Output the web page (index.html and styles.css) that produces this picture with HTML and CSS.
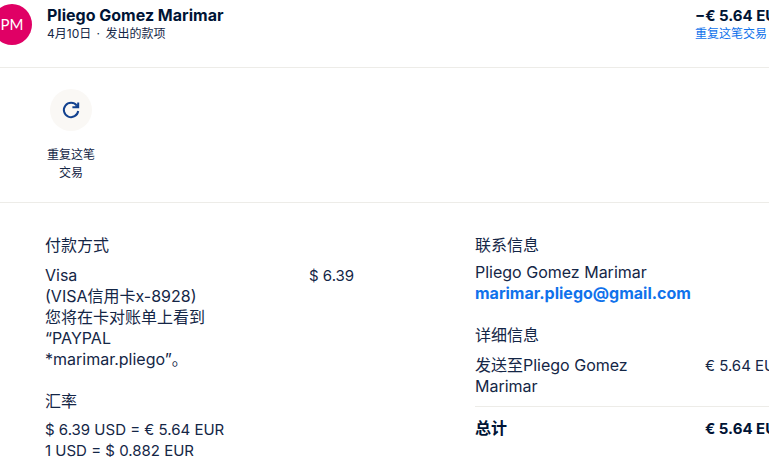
FILE: index.html
```html
<!DOCTYPE html>
<html lang="zh-CN">
<head>
  <meta charset="UTF-8" />
  <meta name="viewport" content="width=device-width, initial-scale=1.0" />
  <title>交易详情</title>
  <link rel="stylesheet" href="styles.css">
</head>
<body>
  <main class="transaction">
    <header class="summary">
      <div class="avatar">PM</div>
      <div class="summary-info">
        <h1>Pliego Gomez Marimar</h1>
        <p>4月10日 <span class="dot">·</span> 发出的款项</p>
      </div>
      <div class="summary-amount">
        <strong>−€ 5.64 EUR</strong>
        <a href="#">重复这笔交易</a>
      </div>
    </header>

    <section class="actions">
      <button type="button" class="action">
        <span class="action-icon">
          <svg width="20" height="20" viewBox="0 0 20 20" fill="none" stroke="#12418f" stroke-width="2">
            <path d="M15.8 5.6 A7.2 7.2 0 1 0 17.2 11" />
            <path d="M17.2 2.4 V7.2 H11.4" />
            <path d="M14 7 L17 4 V7 Z" fill="#12418f" stroke="none" />
          </svg>
        </span>
        <span class="action-label">重复这笔交易</span>
      </button>
    </section>

    <div class="details">
      <div class="column">
        <section class="payment">
          <h2>付款方式</h2>
          <div class="row">
            <p class="source">Visa<br>(VISA信用卡x-8928)<br>您将在卡对账单上看到“PAYPAL *marimar.pliego”。</p>
            <span class="source-amount">$ 6.39</span>
          </div>
        </section>
        <section class="rate">
          <h2>汇率</h2>
          <p>$ 6.39 USD = € 5.64 EUR</p>
          <p>1 USD = $ 0.882 EUR</p>
        </section>
      </div>

      <div class="column">
        <section class="contact">
          <h2>联系信息</h2>
          <p>Pliego Gomez Marimar</p>
          <a href="mailto:marimar.pliego@gmail.com">marimar.pliego@gmail.com</a>
        </section>
        <section class="breakdown">
          <h2>详细信息</h2>
          <div class="row">
            <span class="item">发送至Pliego Gomez Marimar</span>
            <span class="price">€ 5.64 EUR</span>
          </div>
          <div class="row total">
            <span class="item">总计</span>
            <span class="price">€ 5.64 EUR</span>
          </div>
        </section>
      </div>
    </div>
  </main>
</body>
</html>
```
FILE: styles.css
```css
* {
  box-sizing: border-box;
}
html {
  overflow: hidden;
}
body {
  margin: 0;
  background: #fff;
  color: #142646;
  font-family: Inter, "Noto Sans CJK SC", sans-serif;
  font-size: 16px;
  line-height: 21px;
}
h1, h2, p {
  margin: 0;
  font-size: 16px;
}
h2 {
  font-weight: 400;
}
a {
  color: #1072eb;
  text-decoration: none;
}
/* The panel runs past both edges of the window */
.transaction {
  margin: 0 -24px 0 -8px;
}
.summary {
  display: flex;
  padding: 4px 0 22px;
  border-bottom: 1px solid #edece8;
}
.avatar {
  width: 40px;
  height: 41px;
  margin-right: 15px;
  border-radius: 50%;
  background: #e00065;
  color: #fff;
  font-family: Lato, sans-serif;
  font-size: 15px;
  line-height: 41px;
  text-align: center;
}
.summary-info,
.summary-amount {
  padding-top: 1px;
}
.summary-info {
  flex: 1;
}
.summary h1,
.summary strong {
  color: #001435;
  font-weight: 700;
}
.summary p,
.summary a {
  font-size: 12px;
  line-height: 16px;
}
.dot {
  margin: 0 2px;
}
.summary-amount {
  width: 98px;
  white-space: nowrap;
}
.summary-amount strong,
.summary-amount a {
  display: block;
}
.actions {
  padding: 21px 0 20px 55px;
  border-bottom: 1px solid #edece8;
}
.action {
  display: block;
  width: 48px;
  padding: 0;
  border: none;
  background: none;
  color: #142646;
  font: inherit;
  font-size: 12px;
  line-height: 18px;
  cursor: pointer;
}
.action-icon {
  display: flex;
  align-items: center;
  justify-content: center;
  width: 42px;
  height: 42px;
  margin: 0 auto 15px;
  border-radius: 50%;
  background: #faf8f5;
}
.details {
  display: grid;
  grid-template-columns: 1fr 318px;
  gap: 112px;
  padding: 32px 0 0 53px;
}
.row {
  display: flex;
  justify-content: space-between;
}
.source {
  width: 168px;
}
.source-amount {
  width: 54px;
}
/* Money amounts are set a step smaller than the text */
.summary strong,
.source-amount,
.rate p,
.price {
  font-size: 15px;
}
.payment h2 {
  margin-bottom: 9px;
}
.rate h2 {
  margin-bottom: 7px;
}
.breakdown h2 {
  margin-bottom: 9px;
}
.contact h2 {
  margin-bottom: 6px;
}
.payment,
.contact {
  margin-bottom: 21px;
}
.contact a {
  font-weight: 700;
}
.item {
  width: 168px;
}
.price {
  width: 88px;
  white-space: nowrap;
}
.total {
  margin-top: 9px;
  padding-top: 11px;
  border-top: 1px solid #edece8;
  color: #001435;
  font-weight: 700;
}
```
